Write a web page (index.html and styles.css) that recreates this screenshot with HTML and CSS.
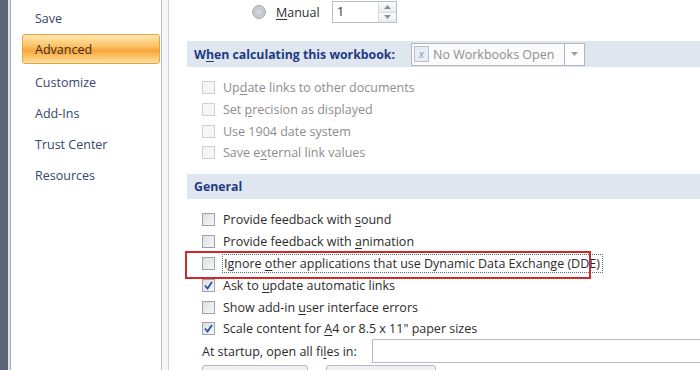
FILE: index.html
```html
<!DOCTYPE html>
<html>
<head>
<meta charset="utf-8">
<link rel="stylesheet" href="styles.css">
</head>
<body>
<div class="window">
  <div class="edge"></div>
  <nav class="sidebar">
    <div class="item">Save</div>
    <div class="item active">Advanced</div>
    <div class="item">Customize</div>
    <div class="item">Add-Ins</div>
    <div class="item">Trust Center</div>
    <div class="item">Resources</div>
  </nav>
  <div class="divider"></div>
  <main class="content">
    <div class="manual-row">
      <span class="radio"></span>
      <span class="radio-label"><u>M</u>anual</span>
      <div class="spin">
        <span class="spin-val">1</span>
        <div class="spin-btns">
          <span class="spin-btn"><svg width="7" height="4" viewBox="0 0 7 4"><path d="M0 4 L3.5 0 L7 4 Z" fill="#8a9099"/></svg></span>
          <span class="spin-btn"><svg width="7" height="4" viewBox="0 0 7 4"><path d="M0 0 L3.5 4 L7 0 Z" fill="#8a9099"/></svg></span>
        </div>
      </div>
    </div>

    <div class="section-head">
      <span class="head-text">W<u>h</u>en calculating this workbook:</span>
      <div class="combo">
        <span class="combo-icon">x</span>
        <span class="combo-text">No Workbooks Open</span>
        <span class="combo-btn"><svg width="7" height="4" viewBox="0 0 7 4"><path d="M0 0 L3.5 4 L7 0 Z" fill="#9a9fa6"/></svg></span>
      </div>
    </div>

    <div class="opts disabled">
      <div class="opt"><span class="cb"></span><span class="txt">Up<u>d</u>ate links to other documents</span></div>
      <div class="opt"><span class="cb"></span><span class="txt">Set <u>p</u>recision as displayed</span></div>
      <div class="opt"><span class="cb"></span><span class="txt">Use 1904 date system</span></div>
      <div class="opt"><span class="cb"></span><span class="txt">Save e<u>x</u>ternal link values</span></div>
    </div>

    <div class="section-head general"><span class="head-text">General</span></div>

    <div class="opts enabled">
      <div class="opt"><span class="cb"></span><span class="txt">Provide feedback with <u>s</u>ound</span></div>
      <div class="opt"><span class="cb"></span><span class="txt">Provide feedback with <u>a</u>nimation</span></div>
      <div class="opt"><span class="cb"></span><span class="txt focus">Ignore <u>o</u>ther applications that use Dynamic Data Exchange (DDE)</span></div>
      <div class="opt"><span class="cb checked"><svg width="11" height="11" viewBox="0 0 11 11"><path d="M2 5.5 L4.5 8.5 L9 2" fill="none" stroke="#2c4f9e" stroke-width="1.8"/></svg></span><span class="txt">Ask to <u>u</u>pdate automatic links</span></div>
      <div class="opt"><span class="cb"></span><span class="txt">Show add-in <u>u</u>ser interface errors</span></div>
      <div class="opt"><span class="cb checked"><svg width="11" height="11" viewBox="0 0 11 11"><path d="M2 5.5 L4.5 8.5 L9 2" fill="none" stroke="#2c4f9e" stroke-width="1.8"/></svg></span><span class="txt">Scale content for <u>A</u>4 or 8.5 x 11" paper sizes</span></div>
    </div>

    <div class="startup">
      <span class="startup-label">At startup, open all fi<u>l</u>es in:</span>
      <span class="input"></span>
    </div>
    <div class="buttons">
      <span class="btn wide"></span>
      <span class="btn"></span>
    </div>

    <div class="highlight"></div>
  </main>
</div>
</body>
</html>
```

FILE: styles.css
```css
html, body {
  margin: 0;
  padding: 0;
}
body {
  width: 700px;
  height: 370px;
  overflow: hidden;
  background: #ffffff;
  font-family: "Open Sans", "Noto Sans", sans-serif;
  font-size: 12px;
  color: #2b2b2b;
}
u {
  text-decoration: underline;
  text-underline-offset: 2px;
}
.window {
  display: flex;
  height: 370px;
}
.edge {
  width: 8px;
  flex: none;
  background: #5b6474;
  border-right: 2px solid #dde1e7;
}
.sidebar {
  width: 150px;
  flex: none;
  border-left: 1px solid #a6adb8;
  border-right: 1px solid #b7bcc5;
  padding-top: 3px;
  background: #ffffff;
}
.item {
  height: 31px;
  display: flex;
  align-items: center;
  padding-left: 24px;
  color: #36466c;
  font-size: 12.5px;
}
.item.active {
  margin: 0 1px 3px 11px;
  padding-left: 12px;
  height: 30px;
  box-sizing: border-box;
  border: 1px solid #e3a540;
  border-radius: 3px;
  background: linear-gradient(#fde8b4 0%, #fbc264 40%, #f8a53c 55%, #fbc66e 80%, #fde3a6 100%);
  color: #3b3020;
}
.divider {
  width: 6px;
  flex: none;
  background: #f5f6f8;
  border-right: 1px solid #cdd1d7;
}
.content {
  flex: 1;
  position: relative;
  padding-left: 18px;
}

/* manual row */
.manual-row {
  height: 24px;
  display: flex;
  align-items: center;
  padding-left: 65px;
}
.radio {
  width: 12px;
  height: 12px;
  border-radius: 50%;
  border: 1px solid #a4a9b0;
  background: radial-gradient(circle at 50% 50%, #d8dade 0%, #c2c6cc 55%, #eceef0 100%);
}
.radio-label {
  width: 56px;
  margin-left: 10px;
  font-size: 12.5px;
  color: #2e2e2e;
}
.spin {
  width: 65px;
  height: 22px;
  box-sizing: border-box;
  border: 1px solid #b9bdc4;
  display: flex;
  background: #fff;
}
.spin-val {
  flex: 1;
  padding-left: 4px;
  line-height: 20px;
  font-size: 12.5px;
}
.spin-btns {
  width: 17px;
  display: flex;
  flex-direction: column;
  border-left: 1px solid #d6d9dd;
}
.spin-btn {
  flex: 1;
  display: flex;
  align-items: center;
  justify-content: center;
  background: linear-gradient(#fafbfc, #e9ecef);
}
.spin-btn + .spin-btn {
  border-top: 1px solid #d6d9dd;
}

/* section headers */
.section-head {
  margin-top: 17px;
  height: 26px;
  background: #dfe6ef;
  display: flex;
  align-items: center;
  padding-left: 7px;
  font-weight: bold;
  color: #1e3b82;
  font-size: 12.3px;
}
.section-head.general {
  margin-top: 0;
  height: 25px;
}
.head-text {
  width: 217px;
  flex: none;
}
.combo {
  width: 174px;
  height: 23px;
  box-sizing: border-box;
  border: 1px solid #b2b6bc;
  background: #fbfbfb;
  display: flex;
  align-items: center;
  font-weight: normal;
}
.combo-icon {
  width: 13px;
  height: 14px;
  margin: 0 4px 0 2px;
  border: 1px solid #b5bfcd;
  background: #e7edf5;
  color: #8c98ab;
  font-size: 11px;
  font-style: italic;
  line-height: 13px;
  text-align: center;
}
.combo-text {
  flex: 1;
  color: #8e8e8e;
  font-size: 12.5px;
}
.combo-btn {
  width: 19px;
  height: 21px;
  border-left: 1px solid #b2b6bc;
  display: flex;
  align-items: center;
  justify-content: center;
  background: #fdfdfd;
}

/* options */
.opts {
  padding: 9px 0 11px 15px;
}
.opts.enabled {
  padding: 9px 0 0 15px;
}
.opt {
  height: 22px;
  display: flex;
  align-items: center;
  font-size: 12.5px;
}
.opts.disabled .opt {
  color: #8d8d8d;
}
.opts.enabled .opt {
  color: #2c2c2c;
}
.opt:last-child {
  height: 21px;
}
.cb {
  width: 13px;
  height: 13px;
  box-sizing: border-box;
  margin-right: 8px;
  flex: none;
  display: flex;
  align-items: center;
  justify-content: center;
}
.opts.disabled .cb {
  border: 1px solid #cdd0d4;
  background: #f6f6f7;
}
.opts.enabled .cb {
  border: 1px solid #9fa4ab;
  background: linear-gradient(135deg, #dcdfe3, #f6f7f8);
}
.focus {
  outline: 1px dotted #6a6a6a;
  outline-offset: 0;
  padding: 0 2px 0 1px;
}

/* startup */
.startup {
  height: 24px;
  display: flex;
  align-items: center;
  padding-left: 15px;
  font-size: 12.5px;
}
.startup-label {
  width: 170px;
  flex: none;
}
.input {
  flex: 1;
  height: 24px;
  box-sizing: border-box;
  border: 1px solid #b8bcc2;
  border-right: none;
  background: #fff;
}
.buttons {
  display: flex;
  gap: 18px;
  padding: 2px 0 0 15px;
}
.btn {
  width: 108px;
  height: 8px;
  border: 1px solid #b6bac0;
  border-radius: 3px;
  background: #eef0f3;
}
.btn.wide {
  width: 104px;
}

/* annotation */
.highlight {
  position: absolute;
  left: 16px;
  top: 251px;
  width: 406px;
  height: 28px;
  box-sizing: border-box;
  border: 2px solid #cf2a2a;
}
```
